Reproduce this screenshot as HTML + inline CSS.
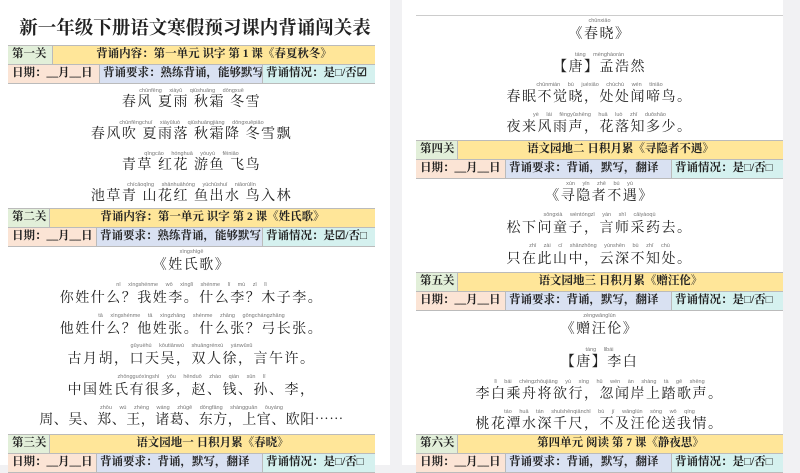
<!DOCTYPE html>
<html><head><meta charset="utf-8"><style>
*{margin:0;padding:0;box-sizing:border-box}
body{width:800px;height:465px;overflow:hidden;background:#f1f1f3;position:relative;font-family:"Liberation Serif","Noto Serif CJK SC",serif;color:#222}
.pg{position:absolute;background:#fff;top:0;height:465px}
.a{position:absolute}
.row{position:absolute;display:flex;border-top:1px solid #bbb;border-bottom:1px solid #bbb;font-weight:bold;font-size:11.5px;line-height:17px}
.row div{white-space:nowrap;overflow:hidden}
.g{background:#e2efd9;border-right:1px solid #bbb;padding-left:4px}
.y{background:#ffe699;text-align:center;flex:1}
.o{background:#fbe4d5;padding-left:4px;border-right:1px solid #bbb}
.l{background:#d9e1f2;padding-left:3px;border-right:1px solid #bbb}
.c{background:#d5f1ef;padding-left:3px;flex:1}
.t{position:absolute;left:0;right:0;text-align:center;font-size:14px;line-height:18px;letter-spacing:1.5px;white-space:nowrap;font-family:"Noto Serif CJK SC",serif}
.p{position:absolute;left:0;right:0;text-align:center;font-size:5.5px;line-height:6px;color:#777;white-space:nowrap;font-family:"Liberation Sans",sans-serif;word-spacing:6px;margin-top:-2px}
</style></head><body>
<div class="pg" style="left:0;width:390px">
<div class="a" style="left:0;width:390px;top:15px;text-align:center;font-size:18.5px;font-weight:bold;font-family:'Noto Serif CJK SC',serif;line-height:24px">新一年级下册语文寒假预习课内背诵闯关表</div>
<div class="row" style="left:8px;width:367px;top:45px;height:20px"><div class="g" style="width:45px">第一关</div><div class="y">背诵内容：第一单元 识字 第 1 课《春夏秋冬》</div></div>
<div class="row" style="left:8px;width:367px;top:64px;height:20px"><div class="o" style="width:92px">日期：__月__日</div><div class="l" style="width:163px">背诵要求：熟练背诵，能够默写</div><div class="c">背诵情况：是□/否☑</div></div>
<div class="a" style="left:8px;width:367px;top:84px;height:124px">
<div class="p" style="top:6px">chūnfēng xiàyǔ qiūshuāng dōngxuě</div><div class="t" style="top:8px">春风 夏雨 秋霜 冬雪</div>
<div class="p" style="top:38px">chūnfēngchuī xiàyǔluò qiūshuāngjiàng dōngxuěpiāo</div><div class="t" style="top:40px">春风吹 夏雨落 秋霜降 冬雪飘</div>
<div class="p" style="top:69px">qīngcǎo hónghuā yóuyú fēiniǎo</div><div class="t" style="top:71px">青草 红花 游鱼 飞鸟</div>
<div class="p" style="top:100px">chícǎoqīng shānhuāhóng yúchūshuǐ niǎorùlín</div><div class="t" style="top:102px">池草青 山花红 鱼出水 鸟入林</div>
</div>
<div class="row" style="left:8px;width:367px;top:208px;height:20px"><div class="g" style="width:42px">第二关</div><div class="y">背诵内容：第一单元 识字 第 2 课《姓氏歌》</div></div>
<div class="row" style="left:8px;width:367px;top:227px;height:20px"><div class="o" style="width:89px">日期：__月__日</div><div class="l" style="width:166px">背诵要求：熟练背诵，能够默写</div><div class="c">背诵情况：是☑/否□</div></div>
<div class="a" style="left:8px;width:367px;top:247px;height:187px">
<div class="p" style="top:4px">xìngshìgē</div><div class="t" style="top:8px">《姓氏歌》</div>
<div class="p" style="top:37px">nǐ xìngshénme wǒ xìnglǐ shénme lǐ mù zǐ lǐ</div><div class="t" style="top:41px">你姓什么？我姓李。什么李？木子李。</div>
<div class="p" style="top:68px">tā xìngshénme tā xìngzhāng shénme zhāng gōngchángzhāng</div><div class="t" style="top:72px">他姓什么？他姓张。什么张？弓长张。</div>
<div class="p" style="top:98px">gǔyuèhú kǒutiānwú shuāngrénxú yánwǔxǔ</div><div class="t" style="top:102px">古月胡，口天吴，双人徐，言午许。</div>
<div class="p" style="top:129px">zhōngguóxìngshì yǒu hěnduō zhào qián sūn lǐ</div><div class="t" style="top:133px">中国姓氏有很多，赵、钱、孙、李，</div>
<div class="p" style="top:160px">zhōu wú zhèng wáng zhūgě dōngfāng shàngguān ōuyáng</div><div class="t" style="top:163px;letter-spacing:0.5px">周、吴、郑、王，诸葛、东方，上官、欧阳……</div>
</div>
<div class="row" style="left:8px;width:367px;top:434px;height:20px"><div class="g" style="width:42px">第三关</div><div class="y">语文园地一 日积月累《春晓》</div></div>
<div class="row" style="left:8px;width:367px;top:453px;height:20px"><div class="o" style="width:89px">日期：__月__日</div><div class="l" style="width:166px">背诵要求：背诵，默写，翻译</div><div class="c">背诵情况：是□/否□</div></div>
</div>
<div class="pg" style="left:402px;width:381px">
<div class="a" style="left:14px;width:367px;top:15px;height:125px;border-top:1px solid #ccc">
<div class="p" style="top:4px">chūnxiǎo</div><div class="t" style="top:8px">《春晓》</div>
<div class="p" style="top:38px">táng mènghàorán</div><div class="t" style="top:41px">【唐】孟浩然</div>
<div class="p" style="top:68px">chūnmián bù juéxiǎo chùchù wén tíniǎo</div><div class="t" style="top:71px">春眠不觉晓，处处闻啼鸟。</div>
<div class="p" style="top:98px">yè lái fēngyǔshēng huā luò zhī duōshǎo</div><div class="t" style="top:101px">夜来风雨声，花落知多少。</div>
</div>
<div class="row" style="left:14px;width:367px;top:140px;height:20px"><div class="g" style="width:42px">第四关</div><div class="y">语文园地二 日积月累《寻隐者不遇》</div></div>
<div class="row" style="left:14px;width:367px;top:159px;height:20px"><div class="o" style="width:90px">日期：__月__日</div><div class="l" style="width:166px">背诵要求：背诵，默写，翻译</div><div class="c">背诵情况：是□/否□</div></div>
<div class="a" style="left:14px;width:367px;top:179px;height:93px">
<div class="p" style="top:4px">xún yǐn zhě bú yù</div><div class="t" style="top:7px">《寻隐者不遇》</div>
<div class="p" style="top:35px">sōngxià wèntóngzǐ yán shī cǎiyàoqù</div><div class="t" style="top:39px">松下问童子，言师采药去。</div>
<div class="p" style="top:66px">zhǐ zài cǐ shānzhōng yúnshēn bù zhī chù</div><div class="t" style="top:70px">只在此山中，云深不知处。</div>
</div>
<div class="row" style="left:14px;width:367px;top:272px;height:20px"><div class="g" style="width:42px">第五关</div><div class="y">语文园地三 日积月累《赠汪伦》</div></div>
<div class="row" style="left:14px;width:367px;top:291px;height:20px"><div class="o" style="width:90px">日期：__月__日</div><div class="l" style="width:166px">背诵要求：背诵，默写，翻译</div><div class="c">背诵情况：是□/否□</div></div>
<div class="a" style="left:14px;width:367px;top:311px;height:123px">
<div class="p" style="top:4px">zèngwānglún</div><div class="t" style="top:8px">《赠汪伦》</div>
<div class="p" style="top:38px">táng lǐbái</div><div class="t" style="top:41px">【唐】李白</div>
<div class="p" style="top:70px">lǐ bái chéngzhōujiāng yù xíng hū wén àn shàng tà gē shēng</div><div class="t" style="top:73px">李白乘舟将欲行，忽闻岸上踏歌声。</div>
<div class="p" style="top:100px">táo huā tán shuǐshēnqiānchǐ bù jí wānglún sòng wǒ qíng</div><div class="t" style="top:103px">桃花潭水深千尺，不及汪伦送我情。</div>
</div>
<div class="row" style="left:14px;width:367px;top:434px;height:20px"><div class="g" style="width:42px">第六关</div><div class="y">第四单元 阅读 第 7 课《静夜思》</div></div>
<div class="row" style="left:14px;width:367px;top:453px;height:20px"><div class="o" style="width:90px">日期：__月__日</div><div class="l" style="width:166px">背诵要求：背诵，默写，翻译</div><div class="c">背诵情况：是□/否□</div></div>
</div>
</body></html>
